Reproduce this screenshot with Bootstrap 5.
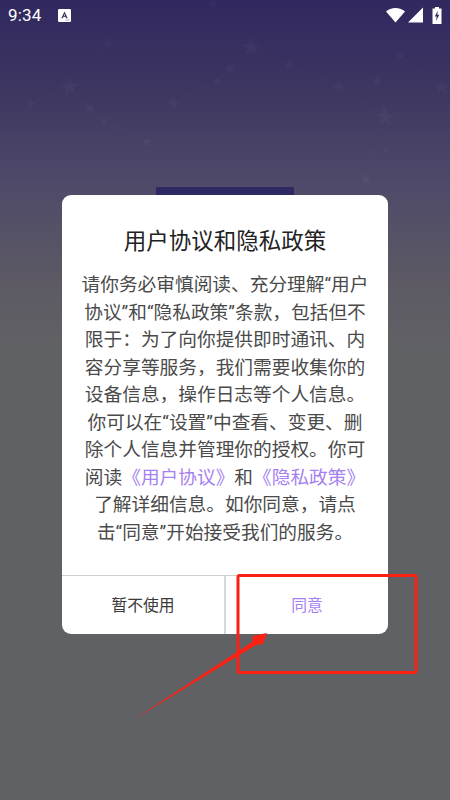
<!DOCTYPE html>
<html lang="zh-CN">
<head>
<meta charset="utf-8">
<meta name="viewport" content="width=device-width, initial-scale=1">
<link href="https://cdn.jsdelivr.net/npm/bootstrap@5.3.0/dist/css/bootstrap.min.css" rel="stylesheet">
<style>
html,body{margin:0;height:100%;}
body{background:#606165;font-family:Roboto,"Noto Sans CJK SC",sans-serif;overflow:hidden;}
.screen{position:relative;width:450px;height:800px;background:linear-gradient(180deg,#30285f 0,#3f3861 100px,#4f4a69 185px,#5d5a64 285px,#606165 350px);}
.starfield{position:absolute;inset:0;pointer-events:none;}
.statusbar{height:30px;padding:0 8px;color:#fff;}
.clock{font-size:17px;line-height:30px;letter-spacing:.2px;width:50px;}
.stack{padding-top:157px;}
.backbar{width:138px;height:8px;background:#2e2863;}
.dialog{width:326px;height:439px;border-radius:9px;background:#fff;overflow:hidden;}
.dialog-title{font-size:22.5px;line-height:30px;color:#222;margin:31px 0 0;font-weight:400;}
.dialog-text{font-size:18.7px;line-height:27.5px;color:#4a4a4a;margin:16px 0 0;white-space:nowrap;}
.purple{color:#a67ff0;}
.dialog-foot{height:59px;border-top:1px solid #cfcfcf;}
.foot-btn{flex:1 1 0;font-size:15.8px;line-height:57px;padding-top:1px;text-align:center;color:#3a3a3a;}
.foot-btn+.foot-btn{border-left:2px solid #d8d8d8;color:#a67ff0;}
.gap-wifi{margin-left:3px;}
.gap-batt{margin-left:9px;}
.annot{position:absolute;inset:0;pointer-events:none;}
</style>
</head>
<body>
<div class="screen">
  <svg class="starfield" width="450" height="800" viewBox="0 0 450 800" aria-hidden="true">
    <defs><path id="st" d="M0-10 2.6-3.2 9.5-3 4.1 1.400 5.900 8.100 0 4.300-5.900 8.100-4.100 1.400-9.500-3-2.600-3.200Z"/></defs>
    <g stroke="#fff" stroke-opacity=".015" fill="none">
      <path d="M213 4 251 47 289 65 339 87 385 117 377 81 400 56 442 87M251 47 230 69 217 81 173 103M70 87 108 43M70 87 90 108 104 121 147 142M70 87 31 104M385 117 366 180"/>
    </g>
    <g fill="#fff" fill-opacity=".028">
      <use href="#st" transform="translate(213 4) scale(.55)"/>
      <use href="#st" transform="translate(251 47) scale(1.05)"/>
      <use href="#st" transform="translate(108 43) scale(.55)"/>
      <use href="#st" transform="translate(289 65) scale(.5)"/>
      <use href="#st" transform="translate(400 56) scale(.5)"/>
      <use href="#st" transform="translate(230 69) scale(.6)"/>
      <use href="#st" transform="translate(217 81) scale(.45)"/>
      <use href="#st" transform="translate(377 81) scale(.65)"/>
      <use href="#st" transform="translate(70 87) scale(1)"/>
      <use href="#st" transform="translate(339 87) scale(.7)"/>
      <use href="#st" transform="translate(442 87) scale(.85)"/>
      <use href="#st" transform="translate(31 104) scale(.45)"/>
      <use href="#st" transform="translate(90 108) scale(.55)"/>
      <use href="#st" transform="translate(173 103) scale(.65)"/>
      <use href="#st" transform="translate(385 117) scale(1.05)"/>
      <use href="#st" transform="translate(104 121) scale(.45)"/>
      <use href="#st" transform="translate(147 142) scale(.6)"/>
      <use href="#st" transform="translate(386 150) scale(.35)"/>
      <use href="#st" transform="translate(366 180) scale(.55)"/>
    </g>
  </svg>
  <div class="position-relative d-flex flex-column h-100">
    <div class="statusbar d-flex align-items-center">
      <span class="clock">9:34</span>
      <svg width="13" height="13" viewBox="0 0 13 13" aria-hidden="true"><rect width="13" height="13" rx="1.2" fill="#fff"/><path d="M6.5 2.4 9.6 9.3H8.1L7.5 7.8H5.4L4.8 9.3H3.4ZM6.5 4.8 5.8 6.700H7.100Z" fill="#30285f"/><rect x="7.500" y="10.400" width="4" height="1.200" fill="#b9b6cc"/></svg>
      <div class="ms-auto d-flex align-items-center">
        <svg width="19" height="16" viewBox="0 0 19 16" aria-hidden="true"><path d="M0 4.500C2.500 2.200 5.800 1 9.500 1S16.500 2.200 19 4.500L9.500 15.500Z" fill="#fff"/></svg>
        <svg class="gap-wifi" width="15" height="16" viewBox="0 0 15 16" aria-hidden="true"><path d="M15 .5V15.500H0Z" fill="#fff"/></svg>
        <svg class="gap-batt" width="10" height="17" viewBox="0 0 10 17" aria-hidden="true"><path fill-rule="evenodd" d="M3 0H7V1.500H9.500V17H.5V1.500H3ZM5.800 3.500 2.800 9.500H4.700L4 14 7.300 7.700H5.300Z" fill="#fff"/></svg>
      </div>
    </div>
    <div class="stack d-flex flex-column align-items-center">
      <div class="backbar"></div>
      <div class="dialog d-flex flex-column text-center">
        <h1 class="dialog-title">用户协议和隐私政策</h1>
        <p class="dialog-text flex-grow-1">请你务必审慎阅读、充分理解“用户<br>协议”和“隐私政策”条款，包括但不<br>限于：为了向你提供即时通讯、内<br>容分享等服务，我们需要收集你的<br>设备信息，操作日志等个人信息。<br>你可以在“设置”中查看、变更、删<br>除个人信息并管理你的授权。你可<br>阅读<span class="purple">《用户协议》</span>和<span class="purple">《隐私政策》</span><br>了解详细信息。如你同意，请点<br>击“同意”开始接受我们的服务。</p>
        <div class="dialog-foot d-flex">
          <div class="foot-btn">暂不使用</div>
          <div class="foot-btn">同意</div>
        </div>
      </div>
    </div>
  </div>
  <svg class="annot" width="450" height="800" viewBox="0 0 450 800" aria-hidden="true">
    <rect x="238" y="575.500" width="178" height="97" rx="1.500" fill="none" stroke="#fa2113" stroke-width="3"/>
    <path d="M133 720 252 642 253 636 267 633 263 644 256 645Z" fill="#fa2113"/>
  </svg>
</div>
<script src="https://cdn.jsdelivr.net/npm/bootstrap@5.3.0/dist/js/bootstrap.bundle.min.js"></script>
</body>
</html>
